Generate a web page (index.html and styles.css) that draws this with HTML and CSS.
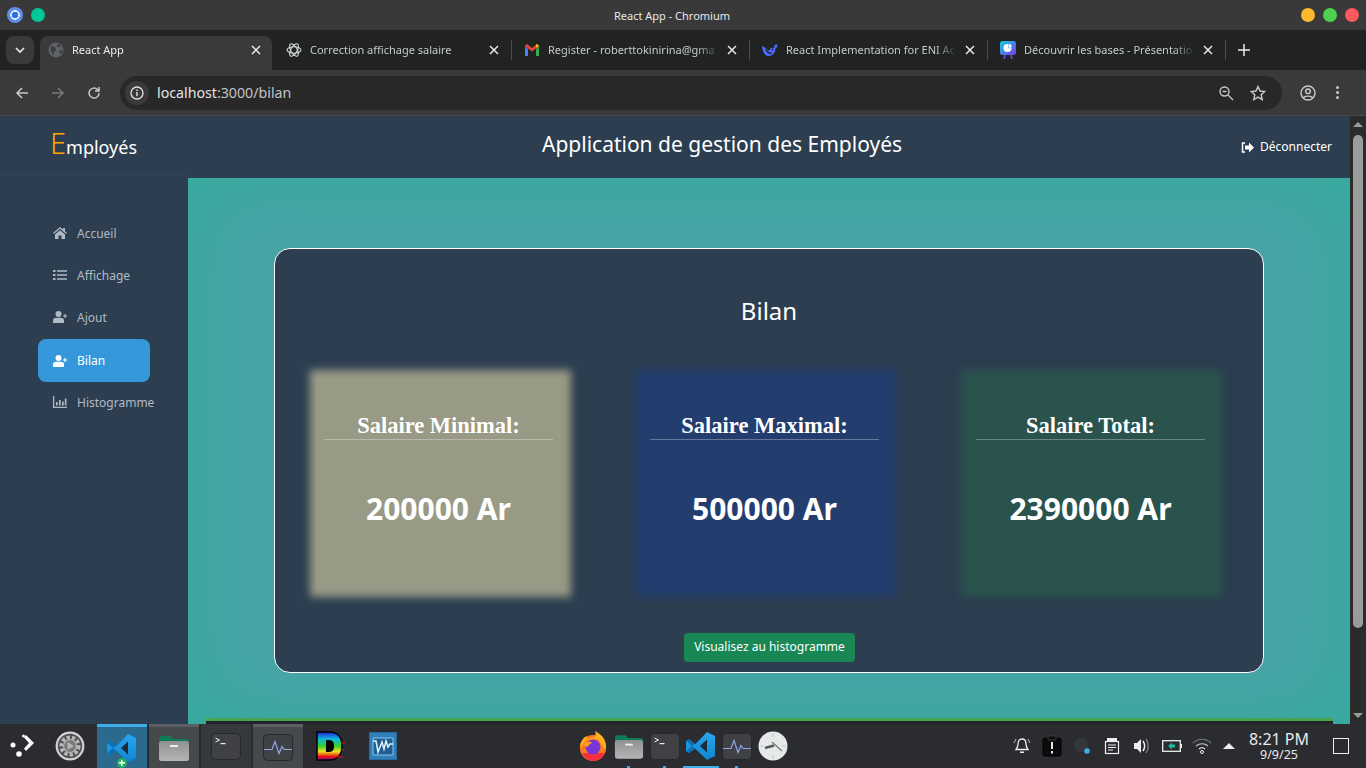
FILE: index.html
```html
<!DOCTYPE html>
<html lang="en">
<head>
    <meta charset="UTF-8">
    <title>React App</title>
    <link rel="stylesheet" href="styles.css">
</head>
<body>
    <!-- Shared icons -->
    <svg class="defs" width="0" height="0">
        <defs>
            <linearGradient id="folder-body" x1="0" y1="0" x2="0" y2="1">
                <stop offset="0" stop-color="#8f9190"/>
                <stop offset="1" stop-color="#b5b5b5"/>
            </linearGradient>
            <linearGradient id="code-light" x1="0" y1="0" x2="0" y2="1">
                <stop offset="0" stop-color="#2aa5ec"/>
                <stop offset="1" stop-color="#0f86d2"/>
            </linearGradient>
            <linearGradient id="slides-fill" x1="0" y1="0" x2="1" y2="1">
                <stop offset="0" stop-color="#18d2d8"/>
                <stop offset="1" stop-color="#7a35f0"/>
            </linearGradient>
            <linearGradient id="d-rainbow" x1="0" y1="0" x2="0" y2="1">
                <stop offset="0" stop-color="#2020d0"/>
                <stop offset=".25" stop-color="#10b8e0"/>
                <stop offset=".5" stop-color="#30d030"/>
                <stop offset=".7" stop-color="#f0e020"/>
                <stop offset=".88" stop-color="#e81010"/>
                <stop offset="1" stop-color="#8010a0"/>
            </linearGradient>
            <symbol id="i-folder" viewBox="0 0 32 28">
                <path d="M1 5a3 3 0 0 1 3-3h8l3 3h13a3 3 0 0 1 3 3v6H1z" fill="#0e7a58"/>
                <rect x="1" y="7" width="30" height="20" rx="2.5" fill="url(#folder-body)"/>
                <rect x="12" y="11" width="8" height="2" fill="#eee"/>
            </symbol>
            <symbol id="i-term" viewBox="0 0 30 27">
                <rect x=".5" y=".5" width="29" height="26" rx="4" fill="#3f4144" stroke="#26282b"/>
                <path d="M4.5 5l4 2-4 2" fill="none" stroke="#eee" stroke-width="1"/>
                <rect x="9.5" y="10" width="5" height="1.2" fill="#eee"/>
            </symbol>
            <symbol id="i-monitor" viewBox="0 0 30 27">
                <rect x=".5" y=".5" width="29" height="26" rx="4" fill="#3f4144" stroke="#26282b"/>
                <path d="M1 15.500h8l3-8 4 12 3-7 2 3h8" fill="none" stroke="#8ea9e6" stroke-width="1.200"/>
            </symbol>
            <symbol id="i-code" viewBox="0 0 30 30">
                <path d="M21 1l8 4v20l-8 4-12-11.500-6 4.500-3-1.500v-10l3-1.500 6 4.500z" fill="url(#code-light)"/>
                <path d="M21 8.500l-7 6.500 7 6.500z" fill="#1d2b38"/>
                <path d="M21 1L9 12.500 3 8 0 9.500l6 5.500 15-14zM21 29L9 17.500 3 22 0 20.500 6 15l15 14z" fill="#0a6fb5"/>
            </symbol>
            <symbol id="i-user-plus" viewBox="0 0 14 12">
                <circle cx="5.500" cy="3" r="3" fill="currentColor"/>
                <path d="M0 12V9.500C0 7.800 1.300 6.800 3 6.800h5c1.700 0 3 1 3 2.700V12z" fill="currentColor"/>
                <path d="M10 5h4M12 3v4" stroke="currentColor" stroke-width="1.200"/>
            </symbol>
            <symbol id="i-close" viewBox="0 0 10 10">
                <path d="M1 1l8 8M9 1l-8 8" stroke="currentColor" stroke-width="1.500"/>
            </symbol>
        </defs>
    </svg>

    <!-- Window title -->
    <div class="titlebar">
        <div class="title-left">
            <span class="chromium-dot"></span>
            <span class="green-dot"></span>
        </div>
        <div class="title-text">React App - Chromium</div>
        <div class="title-right">
            <span class="win-dot yellow"></span>
            <span class="win-dot green"></span>
            <span class="win-dot red"></span>
        </div>
    </div>

    <!-- Tabs -->
    <div class="tabbar">
        <div class="tab-search">
            <svg width="10" height="7" viewBox="0 0 10 7"><path d="M1 1l4 4 4-4" fill="none" stroke="#e8eaed" stroke-width="1.600"/></svg>
        </div>
        <div class="tab active">
            <svg class="favicon" width="16" height="16" viewBox="0 0 16 16">
                <circle cx="8" cy="8" r="7.500" fill="#5f6368"/>
                <path d="M3 4l4 1 1 3-2 2-1 4-2-5zM10 1.500l3 2-2 2-2-1zM12 8l3 .5-2 4-2-2z" fill="#3c3f42"/>
            </svg>
            <span class="tab-label">React App</span>
            <svg class="tab-x" width="10" height="10"><use href="#i-close"/></svg>
        </div>
        <div class="tab">
            <svg class="favicon" width="16" height="16" viewBox="0 0 16 16">
                <g fill="none" stroke="#d5d7d9" stroke-width="1.100">
                    <ellipse cx="8" cy="8" rx="7" ry="3.200"/>
                    <ellipse cx="8" cy="8" rx="7" ry="3.200" transform="rotate(60 8 8)"/>
                    <ellipse cx="8" cy="8" rx="7" ry="3.200" transform="rotate(120 8 8)"/>
                </g>
            </svg>
            <span class="tab-label">Correction affichage salaire</span>
            <svg class="tab-x" width="10" height="10"><use href="#i-close"/></svg>
        </div>
        <div class="tab">
            <svg class="favicon" width="16" height="16" viewBox="0 0 16 16">
                <path d="M1 4v10h3V7z" fill="#4285f4"/>
                <path d="M15 4v10h-3V7z" fill="#34a853"/>
                <path d="M1 4l7 5.500L15 4v-.5L13 2 8 6 3 2 1 3.500z" fill="#ea4335"/>
                <path d="M12 2v4l3-2V3.500z" fill="#fbbc04"/>
            </svg>
            <span class="tab-label">Register - roberttokinirina@gma</span>
            <svg class="tab-x" width="10" height="10"><use href="#i-close"/></svg>
        </div>
        <div class="tab">
            <svg class="favicon" width="16" height="16" viewBox="0 0 16 16">
                <path d="M0 4c3 1 5 3 7 5 1-3 3-4 5-3 .5-1 .5-2 .5-3l3-1-.5 2 .5 1-2 1c0 5-3 8-7 8-4 0-6-5-6.500-10z" fill="#4d6bfe"/>
                <path d="M4 7c1 3 3 5 6 4" fill="none" stroke="#202322" stroke-width="1.300"/>
                <circle cx="10.500" cy="7.500" r=".9" fill="#202322"/>
            </svg>
            <span class="tab-label">React Implementation for ENI Ac</span>
            <svg class="tab-x" width="10" height="10"><use href="#i-close"/></svg>
        </div>
        <div class="tab">
            <svg class="favicon" width="16" height="18" viewBox="0 0 16 18">
                <rect x="0" y="0" width="16" height="14" rx="2.500" fill="url(#slides-fill)"/>
                <circle cx="7.500" cy="7" r="4" fill="#fff"/>
                <path d="M8.500 2.500l3.500 1.500-1 3H8.500z" fill="#fff" stroke="#3a8fe8" stroke-width=".5"/>
                <path d="M5 14l-1 4M11 14l1 4" stroke="#7a4df5" stroke-width="1.500"/>
            </svg>
            <span class="tab-label">Découvrir les bases - Présentatio</span>
            <svg class="tab-x" width="10" height="10"><use href="#i-close"/></svg>
        </div>
        <svg class="tab-plus" width="12" height="12" viewBox="0 0 12 12"><path d="M6 0v12M0 6h12" stroke="#e8eaed" stroke-width="1.500"/></svg>
    </div>

    <!-- Address bar -->
    <div class="toolbar">
        <div class="nav-buttons">
            <svg width="14" height="14" viewBox="0 0 14 14"><path d="M13 7H2M7 2L2 7l5 5" fill="none" stroke="#c7c9cc" stroke-width="1.500"/></svg>
            <svg width="14" height="14" viewBox="0 0 14 14"><path d="M1 7h11M7 2l5 5-5 5" fill="none" stroke="#77797c" stroke-width="1.500"/></svg>
            <svg width="14" height="14" viewBox="0 0 14 14"><path d="M12 7a5 5 0 1 1-1.500-3.500L12 5M12 1v4H8" fill="none" stroke="#c7c9cc" stroke-width="1.500"/></svg>
        </div>
        <div class="omnibox">
            <span class="site-info">
                <svg width="14" height="14" viewBox="0 0 14 14"><circle cx="7" cy="7" r="6" fill="none" stroke="#e3e3e3" stroke-width="1.300"/><path d="M7 6v4.200M7 3.500v1.500" stroke="#e3e3e3" stroke-width="1.400"/></svg>
            </span>
            <span class="url">localhost<span class="url-path">:3000/bilan</span></span>
            <svg class="omni-icon" width="16" height="16" viewBox="0 0 16 16"><circle cx="6.500" cy="6.500" r="4.500" fill="none" stroke="#c7c9cc" stroke-width="1.400"/><path d="M10 10l5 5M4.500 6.500h4" stroke="#c7c9cc" stroke-width="1.400"/></svg>
            <svg class="omni-icon star" width="16" height="16" viewBox="0 0 16 16"><path d="M8 1.500l2 4.500 4.800.5-3.600 3.200 1 4.800L8 12.100l-4.200 2.400 1-4.800L1.200 6.500 6 6z" fill="none" stroke="#c7c9cc" stroke-width="1.400"/></svg>
        </div>
        <svg class="profile" width="16" height="16" viewBox="0 0 16 16"><circle cx="8" cy="8" r="7" fill="none" stroke="#c7c9cc" stroke-width="1.400"/><circle cx="8" cy="6.300" r="2.300" fill="none" stroke="#c7c9cc" stroke-width="1.400"/><path d="M3.500 13c1-2.500 8-2.500 9 0" fill="none" stroke="#c7c9cc" stroke-width="1.400"/></svg>
        <div class="menu-dots"><span></span><span></span><span></span></div>
    </div>

    <!-- Page -->
    <div class="viewport">
        <div class="page">
            <header class="app-header">
                <div class="brand"><span class="brand-e">E</span>mployés</div>
                <h1 class="app-title">Application de gestion des Employés</h1>
                <a class="logout">
                    <svg width="13" height="11" viewBox="0 0 13 11"><path d="M4 1H1.500v9H4" fill="none" stroke="#fff" stroke-width="1.500"/><path d="M4 3.500h4V.5l5 5-5 5v-3H4z" fill="#fff"/></svg>
                    Déconnecter
                </a>
            </header>
            <div class="app-body">
                <nav class="sidebar">
                    <a class="nav-item">
                        <svg width="14" height="12" viewBox="0 0 14 12"><path d="M7 0L0 6l.8 1L7 1.800 13.200 7l.8-1-2-1.700V1h-2v1.600z" fill="currentColor"/><path d="M2 7.500L7 3.200l5 4.300V12H8.500V8.500h-3V12H2z" fill="currentColor"/></svg>
                        Accueil
                    </a>
                    <a class="nav-item">
                        <svg width="14" height="12" viewBox="0 0 14 12"><path d="M0 1h2.500v2H0zM0 5h2.500v2H0zM0 9h2.500v2H0zM4 1.300h10v1.400H4zM4 5.300h10v1.400H4zM4 9.300h10v1.400H4z" fill="currentColor"/></svg>
                        Affichage
                    </a>
                    <a class="nav-item">
                        <svg width="14" height="12"><use href="#i-user-plus"/></svg>
                        Ajout
                    </a>
                    <a class="nav-item active">
                        <svg width="14" height="12"><use href="#i-user-plus"/></svg>
                        Bilan
                    </a>
                    <a class="nav-item">
                        <svg width="14" height="12" viewBox="0 0 14 12"><path d="M0 0h1.300v10.700H14V12H0z" fill="currentColor"/><path d="M3 6h1.700v3.500H3zM6 4h1.700v5.500H6zM9 5.500h1.700v4H9zM11.800 2.500h1.700v7h-1.700z" fill="currentColor"/></svg>
                        Histogramme
                    </a>
                </nav>
                <main class="content">
                    <section class="panel">
                        <h2 class="panel-title">Bilan</h2>
                        <div class="stats">
                            <div class="stat stat-min">
                                <h3 class="stat-label">Salaire Minimal:</h3>
                                <p class="stat-value">200000 Ar</p>
                            </div>
                            <div class="stat stat-max">
                                <h3 class="stat-label">Salaire Maximal:</h3>
                                <p class="stat-value">500000 Ar</p>
                            </div>
                            <div class="stat stat-total">
                                <h3 class="stat-label">Salaire Total:</h3>
                                <p class="stat-value">2390000 Ar</p>
                            </div>
                        </div>
                        <button class="btn-chart">Visualisez au histogramme</button>
                    </section>
                    <div class="footer-strip"></div>
                </main>
            </div>
        </div>
        <div class="scrollbar">
            <span class="arrow up"></span>
            <span class="thumb"></span>
            <span class="arrow down"></span>
        </div>
    </div>

    <!-- Desktop panel -->
    <div class="taskbar">
        <div class="task-left">
            <span class="launcher">
                <svg width="28" height="28" viewBox="0 0 28 28"><path d="M18 3l8 8-8 8-2-2.500 5-5.500-5-5.500z" fill="#fff"/><circle cx="15.500" cy="4" r="1.500" fill="#fff"/><circle cx="5" cy="13" r="2.500" fill="#fff"/><circle cx="11" cy="22" r="2.800" fill="#fff"/></svg>
            </span>
            <span class="settings-icon">
                <svg width="30" height="30" viewBox="0 0 30 30"><circle cx="15" cy="15" r="13.300" fill="#4d4f52" stroke="#d2d2d2" stroke-width="2.200"/><circle cx="15" cy="15" r="8.800" fill="none" stroke="#b9b9b9" stroke-width="3.600" stroke-dasharray="3.400 2"/><circle cx="15" cy="15" r="6.500" fill="#77797c" stroke="#b9b9b9" stroke-width="1.200"/><path d="M12.500 11l6.500 4-6.500 4z" fill="#b5b5b5"/></svg>
            </span>
            <span class="task-tile code-tile">
                <svg width="30" height="30"><use href="#i-code"/></svg>
                <span class="tile-badge"></span>
            </span>
            <span class="task-tile lit"><svg width="32" height="28"><use href="#i-folder"/></svg></span>
            <span class="task-tile plain"><svg width="30" height="27"><use href="#i-term"/></svg></span>
            <span class="task-tile lit"><svg width="30" height="27"><use href="#i-monitor"/></svg></span>
            <span class="task-tile bare">
                <svg width="30" height="30" viewBox="0 0 30 30"><path d="M1 1h12c9 0 13 6 13 14s-4 14-13 14H1z" fill="url(#d-rainbow)" stroke="#000" stroke-width="1.500"/><path d="M10 9h3c4 0 5 3 5 6s-1 6-5 6h-3z" fill="#000"/><path d="M25 12h4M25 19h3M21 26h6" stroke="#e81010"/></svg>
            </span>
            <span class="task-tile bare">
                <svg width="28" height="28" viewBox="0 0 28 28"><rect x=".5" y=".5" width="27" height="27" fill="#2f7fbd" stroke="#2a6a9c"/><path d="M4 6h20v17H4z" fill="#1d5f94" stroke="#8cc4ea" stroke-width="1"/><path d="M4 9h3l2 11 4-10 2 7 2-8 2 6 2-3h3" fill="none" stroke="#e5f3fc" stroke-width="1.500"/></svg>
            </span>
        </div>
        <div class="dock">
            <svg width="30" height="30" viewBox="0 0 30 30"><circle cx="15" cy="17" r="13" fill="#ff7a1f"/><path d="M2 17C2 10 6 6 9 5c-1 2 0 3 1 3 2-1 4-1 5-1 3-1 3-4 2-7 6 3 11 8 11 15 0 2-1 4-1 4L20 8 8 9z" fill="#ffb01f"/><path d="M4 22c2 5 7 8 11 8 6 0 10-3 12-8z" fill="#f3303f"/><circle cx="15" cy="16" r="7.500" fill="#7a35d6"/><path d="M5 13c3-3 7-3 9-1-2 1-4 2-4 4-2 0-4-1-5-3z" fill="#ff9a1f"/></svg>
            <svg width="30" height="27"><use href="#i-folder"/></svg>
            <svg width="30" height="27"><use href="#i-term"/></svg>
            <svg width="30" height="30"><use href="#i-code"/></svg>
            <svg width="30" height="27"><use href="#i-monitor"/></svg>
            <svg width="30" height="30" viewBox="0 0 30 30"><circle cx="15" cy="15" r="14.500" fill="#e7e9e8"/><path d="M15 2.500v3M15 24.500v3M2.500 15h3M24.500 15h3" stroke="#8fc4e0" stroke-width="1"/><path d="M16 14.500L7 17" stroke="#55575a" stroke-width="2.400"/><path d="M14 11l10 9" stroke="#77797c" stroke-width="1.200"/></svg>
            <span class="dock-mark mark-a"></span>
            <span class="dock-mark mark-b"></span>
            <span class="dock-mark mark-c"></span>
            <span class="dock-mark mark-d"></span>
        </div>
        <div class="tray">
            <span class="tray-slot"><svg width="18" height="18" viewBox="0 0 18 18"><path d="M9 2c3 0 4 2.500 4 5 0 3 1 4 2 5.500H3C4 11 5 10 5 7c0-2.500 1-5 4-5z" fill="none" stroke="#eee" stroke-width="1.300"/><path d="M7 14.500h4v1.500H7z" fill="#eee"/><path d="M3 2L1 6M15 2l2 4" stroke="#bbb"/></svg></span>
            <span class="tray-slot"><svg width="20" height="22" viewBox="0 0 20 22"><rect x="1" y="3" width="18" height="18" rx="2" fill="#0c0c0c" stroke="#000"/><rect x="6" y="1" width="8" height="4" rx="1" fill="#0c0c0c" stroke="#3a3a3a"/><path d="M10 7v7M10 16v2.500" stroke="#e6e6e6" stroke-width="2"/></svg></span>
            <span class="tray-slot"><svg width="18" height="18" viewBox="0 0 18 18"><circle cx="8" cy="8" r="7" fill="#33363a"/><circle cx="14" cy="14" r="2.800" fill="#3daee9"/></svg></span>
            <span class="tray-slot"><svg width="16" height="18" viewBox="0 0 16 18"><path d="M3 4V1h10v3" fill="#eee"/><rect x="1.500" y="4.500" width="13" height="12" fill="none" stroke="#eee" stroke-width="1.200"/><path d="M4 8h8M4 10.500h8M4 13h5" stroke="#eee" stroke-width="1.100"/></svg></span>
            <span class="tray-slot"><svg width="18" height="18" viewBox="0 0 18 18"><path d="M1 6h3l4-4v14l-4-4H1z" fill="#eee"/><path d="M10 4c2 3 2 7 0 10" fill="none" stroke="#eee" stroke-width="1.500"/><path d="M13 2c3 4 3 10 0 14" fill="none" stroke="#8a8c8f" stroke-width="1.200"/></svg></span>
            <span class="tray-slot"><svg width="20" height="12" viewBox="0 0 20 12"><rect x=".7" y=".7" width="17.600" height="10.600" fill="none" stroke="#eee" stroke-width="1.300"/><path d="M18.500 4H20v4h-1.500z" fill="#eee"/><path d="M6 6l4-3.500v2h3v3h-3v2z" fill="#1abc9c"/></svg></span>
            <span class="tray-slot"><svg width="20" height="16" viewBox="0 0 20 16"><path d="M1 5c5-5 13-5 18 0" fill="none" stroke="#77797c" stroke-width="1.100"/><path d="M4 8c3.500-3 8.500-3 12 0" fill="none" stroke="#ccc" stroke-width="1.100"/><path d="M7 11c1.800-1.500 4.200-1.500 6 0" fill="none" stroke="#eee" stroke-width="1.100"/><circle cx="10" cy="14" r="1.500" fill="none" stroke="#eee"/></svg></span>
            <span class="tray-up"></span>
            <div class="clock">
                <span class="clock-time">8:21 PM</span>
                <span class="clock-date">9/9/25</span>
            </div>
            <span class="show-desktop"></span>
        </div>
    </div>
</body>
</html>
```

FILE: styles.css
```css
/* General page */
* {
    box-sizing: border-box;
}

html,
body {
    margin: 0;
    height: 768px;
    overflow: hidden;
}

body {
    display: flex;
    flex-direction: column;
    font-family: "Noto Sans", sans-serif;
    background-color: #2a2c30;
}

.defs {
    position: absolute;
}

/* Window title */
.titlebar {
    height: 30px;
    display: grid;
    grid-template-columns: 1fr auto 1fr;
    align-items: center;
    padding: 0 7px;
    background-color: #393939;
}

.title-left,
.title-right {
    display: flex;
    align-items: center;
    gap: 8px;
}

.title-right {
    justify-content: flex-end;
    gap: 8px;
}

.title-text {
    color: #e8e8e8;
    font-size: 11px;
    margin-left: -22px;
}

.chromium-dot {
    width: 16px;
    height: 16px;
    border-radius: 50%;
    background: radial-gradient(circle, #2f6fe0 0 3px, #e8f0fe 3.5px 4.5px, #5b8fe8 5px);
}

.green-dot {
    width: 14px;
    height: 14px;
    border-radius: 50%;
    background-color: #00c896;
}

.win-dot {
    width: 14px;
    height: 14px;
    border-radius: 50%;
}

.win-dot.yellow {
    background-color: #fcb92b;
}

.win-dot.green {
    background-color: #4cd04f;
}

.win-dot.red {
    background-color: #fc5a5f;
}

/* Tabs */
.tabbar {
    height: 40px;
    display: flex;
    align-items: flex-end;
    padding-left: 6px;
    background-color: #202322;
}

.tab-search {
    width: 28px;
    height: 28px;
    margin: 0 6px 6px 0;
    display: flex;
    align-items: center;
    justify-content: center;
    border-radius: 8px;
    background-color: #3a3a3a;
}

.tab {
    position: relative;
    width: 238px;
    height: 34px;
    display: flex;
    align-items: center;
    padding: 0 17px 6px 8px;
    color: #c7c9cc;
    font-size: 11px;
}

.tab::after {
    content: "";
    position: absolute;
    right: 4px;
    top: 4px;
    height: 20px;
    width: 1px;
    background-color: #4a4c4d;
}

.tab.active {
    width: 232px;
    margin-right: 6px;
    padding-right: 11px;
    background-color: #3a3a3a;
    color: #e8eaed;
    border-radius: 8px 8px 0 0;
}

.tab.active::after {
    display: none;
}

.favicon {
    flex: none;
}

.tab-label {
    flex: 1;
    min-width: 0;
    margin: 0 0 2px 8px;
    white-space: nowrap;
    -webkit-mask-image: linear-gradient(90deg, #000 calc(100% - 28px), transparent calc(100% - 6px));
    mask-image: linear-gradient(90deg, #000 calc(100% - 28px), transparent calc(100% - 6px));
}

.tab-x {
    flex: none;
    margin-left: 2px;
    color: #e8eaed;
}

.tab-plus {
    margin: 0 0 14px 8px;
}

/* Address bar */
.toolbar {
    height: 46px;
    display: flex;
    align-items: center;
    padding: 0 15px 0 15px;
    background-color: #3a3a3a;
    border-bottom: 1px solid #4a4a4a;
}

.nav-buttons {
    display: flex;
    gap: 22px;
    width: 105px;
}

.omnibox {
    width: 1162px;
    height: 34px;
    display: flex;
    align-items: center;
    padding-right: 16px;
    border-radius: 17px;
    background-color: #282828;
}

.site-info {
    width: 24px;
    height: 24px;
    margin: 0 8px 0 5px;
    display: flex;
    align-items: center;
    justify-content: center;
    border-radius: 50%;
    background-color: #3a3a3a;
}

.url {
    flex: 1;
    color: #e3e3e3;
    font-size: 14.2px;
}

.url-path {
    color: #c2c4c6;
}

.star {
    margin-left: 16px;
}

.profile {
    margin-left: 18px;
}

.menu-dots {
    margin-left: 20px;
    display: flex;
    flex-direction: column;
    gap: 2px;
}

.menu-dots span {
    width: 3px;
    height: 3px;
    border-radius: 50%;
    background-color: #c7c9cc;
}

/* Page */
.viewport {
    height: 608px;
    display: flex;
}

.page {
    flex: 1;
    display: flex;
    flex-direction: column;
    background-color: #2c3e50;
}

.app-header {
    height: 62px;
    display: flex;
    align-items: flex-start;
    color: white;
}

.brand {
    width: 188px;
    height: 59px;
    padding: 8px 0 0 50px;
    border-bottom: 1px solid #34475a;
    font-size: 18px;
    line-height: 38px;
}

.brand-e {
    color: #ffa500;
    font-size: 29px;
    font-weight: 300;
}

.app-title {
    flex: 1;
    margin: 12px 0 0;
    padding-left: 15px;
    text-align: center;
    font-size: 21px;
    line-height: 32px;
    font-weight: 400;
}

.logout {
    display: flex;
    align-items: center;
    gap: 6px;
    margin: 22px 18px 0 0;
    font-size: 12px;
    line-height: 18px;
}

.app-body {
    flex: 1;
    display: flex;
    min-height: 0;
}

/* Sidebar */
.sidebar {
    width: 188px;
    padding: 34px 0 0 38px;
}

.nav-item {
    width: 112px;
    height: 42px;
    display: flex;
    align-items: center;
    gap: 10px;
    padding-left: 15px;
    color: #b0bac4;
    font-size: 12px;
    white-space: nowrap;
}

.nav-item svg {
    flex: none;
}

.nav-item.active {
    height: 43px;
    margin: 1px 0 -1px;
    color: white;
    background-color: #3498db;
    border-radius: 8px;
}

/* Main content */
.content {
    flex: 1;
    padding: 70px 17px 0 18px;
    background-color: #49a3a6;
    box-shadow: inset 0 0 90px #32ac9c;
}

.panel {
    margin: 0 69px 45px 68px;
    height: 425px;
    padding: 42px 50px 0 41px;
    display: flex;
    flex-direction: column;
    align-items: center;
    border: 1px solid white;
    border-radius: 16px;
    background-color: #2c3e50;
}

.panel-title {
    margin: 0 0 47px;
    padding-left: 9px;
    color: white;
    font-size: 24px;
    line-height: 40px;
    font-weight: 400;
}

.stats {
    width: 100%;
    display: flex;
    justify-content: space-between;
}

.stat {
    width: 245px;
    height: 211px;
    padding: 0 8px;
    color: white;
    text-align: center;
}

.stat-min {
    background-color: #989a85;
    box-shadow: 2px 0 8px 8px #989a85;
}

.stat-max {
    background-color: #243d6f;
    box-shadow: 1px 0 8px 8px #243d6f;
}

.stat-total {
    background-color: #2a534d;
    box-shadow: 1px 0 8px 8px #2a534d;
}

.stat-label {
    margin: 35px 0 0;
    padding-bottom: 1px;
    border-bottom: 1px solid rgba(255, 255, 255, 0.3);
    font-family: "Liberation Serif", serif;
    font-size: 22.5px;
    line-height: 25px;
    font-weight: bold;
}

.stat-value {
    margin: 47px 0 0;
    font-size: 30px;
    line-height: 44px;
    font-weight: bold;
}

.btn-chart {
    width: 171px;
    height: 29px;
    margin: 44px 0 0 10px;
    padding: 0 0 2px;
    border: none;
    border-radius: 4px;
    color: white;
    background-color: #198754;
    font-family: "Noto Sans", sans-serif;
    font-size: 12px;
}

.footer-strip {
    height: 6px;
    background-color: #212529;
    border-top: 3px solid #46a64e;
}

/* Scrollbar */
.scrollbar {
    position: relative;
    width: 16px;
    background-color: #2b2b2b;
}

.thumb {
    position: absolute;
    left: 3px;
    top: 19px;
    width: 10px;
    height: 493px;
    border-radius: 5px;
    background-color: #9b9b9b;
}

.arrow {
    position: absolute;
    left: 3px;
    width: 0;
    height: 0;
    border-left: 5px solid transparent;
    border-right: 5px solid transparent;
}

.arrow.up {
    top: 6px;
    border-bottom: 5px solid #9b9b9b;
}

.arrow.down {
    bottom: 6px;
    border-top: 5px solid #9b9b9b;
}

/* Desktop panel */
.taskbar {
    height: 44px;
    display: flex;
    align-items: center;
    background-color: #2a2c30;
}

.task-left {
    width: 568px;
    height: 44px;
    display: flex;
    align-items: center;
}

.launcher {
    width: 43px;
    padding-left: 8px;
    display: flex;
}

.settings-icon {
    width: 54px;
    padding-left: 12px;
    display: flex;
}

.task-tile {
    position: relative;
    width: 50px;
    height: 44px;
    margin-right: 2px;
    display: flex;
    align-items: center;
    justify-content: center;
}

.code-tile {
    background-color: #2b6a8d;
    border-top: 3px solid #3daee9;
}

.lit {
    background-color: #45484d;
    border-top: 3px solid #5c5f63;
}

.plain {
    background-color: #35383c;
}

.bare {
    width: 52px;
    margin: 0;
}

.tile-badge {
    position: absolute;
    left: 20px;
    top: 31px;
    width: 10px;
    height: 10px;
    border-radius: 50%;
    background: linear-gradient(#fff, #fff) center / 6px 1.5px no-repeat,
        linear-gradient(#fff, #fff) center / 1.5px 6px no-repeat,
        #27ae60;
}

.dock {
    position: relative;
    width: 230px;
    height: 44px;
    display: flex;
    align-items: center;
    gap: 6px;
    padding-left: 10px;
}

.dock-mark {
    position: absolute;
    bottom: 0;
    height: 2px;
    width: 3px;
    background-color: #3daee9;
}

.mark-a {
    left: 59px;
}

.mark-b {
    left: 95px;
}

.mark-c {
    left: 115px;
    width: 36px;
}

.mark-d {
    left: 167px;
}

.tray {
    flex: 1;
    display: flex;
    align-items: center;
    padding-left: 209px;
    height: 44px;
}

.tray-slot {
    width: 30px;
    display: flex;
    justify-content: center;
}

.tray-up {
    width: 0;
    height: 0;
    margin-left: 6px;
    border-left: 6px solid transparent;
    border-right: 6px solid transparent;
    border-bottom: 6px solid #eee;
}

.clock {
    width: 72px;
    margin-left: 8px;
    display: flex;
    flex-direction: column;
    align-items: center;
    color: #e8e8e8;
}

.clock-time {
    font-size: 16px;
    line-height: 18px;
}

.clock-date {
    font-size: 12.5px;
    line-height: 14px;
}

.show-desktop {
    width: 16px;
    height: 16px;
    margin-left: 18px;
    border: 1.500px solid #eee;
}
```
